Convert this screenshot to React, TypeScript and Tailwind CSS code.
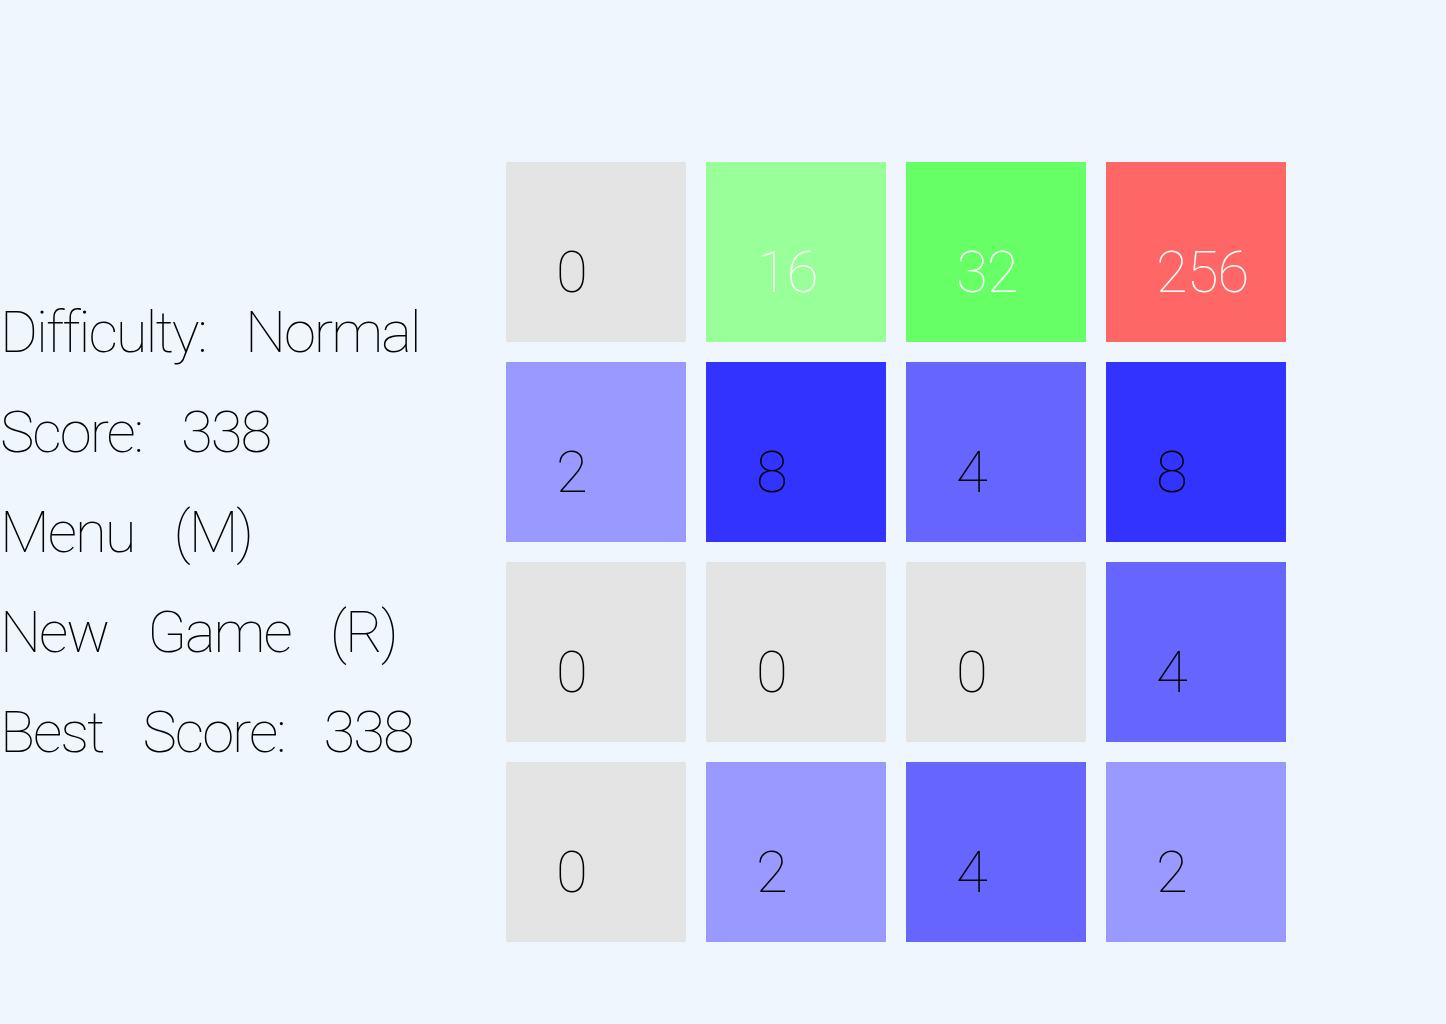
import React from "react";

const board: number[][] = [
  [0, 16, 32, 256],
  [2, 8, 4, 8],
  [0, 0, 0, 4],
  [0, 2, 4, 2],
];

function tileClass(v: number): string {
  switch (v) {
    case 2:
      return "bg-[#9999ff] text-black";
    case 4:
      return "bg-[#6666ff] text-black";
    case 8:
      return "bg-[#3333ff] text-black";
    case 16:
      return "bg-[#99ff99] text-white";
    case 32:
      return "bg-[#66ff66] text-white";
    case 256:
      return "bg-[#ff6666] text-white";
    default:
      return "bg-[#e4e4e4] text-black";
  }
}

const lines: string[][] = [
  ["Difficulty:", "Normal"],
  ["Score:", "338"],
  ["Menu", "(M)"],
  ["New", "Game", "(R)"],
  ["Best", "Score:", "338"],
];

export default function App() {
  return (
    <div
      className="w-[1446px] h-[1024px] bg-[#eff6fe] flex overflow-hidden"
      style={{ fontFamily: "Roboto, 'DejaVu Sans', sans-serif" }}
    >
      <div className="w-[506px] pt-[282px] flex flex-col">
        {lines.map((words, i) => (
          <div
            key={i}
            className="h-[100px] leading-[100px] text-[58px] font-thin text-black flex gap-[39px] tracking-[-2px]"
          >
            {words.map((w, j) => (
              <span key={j}>{w}</span>
            ))}
          </div>
        ))}
      </div>
      <div className="pt-[162px]">
        <div className="grid grid-cols-4 gap-5 w-[780px]">
          {board.flat().map((v, i) => (
            <div key={i} className={`w-[180px] h-[180px] ${tileClass(v)}`}>
              <div className="pt-[81px] pl-[50px] text-[58px] leading-none font-thin tracking-[-1px]">{v}</div>
            </div>
          ))}
        </div>
      </div>
    </div>
  );
}
